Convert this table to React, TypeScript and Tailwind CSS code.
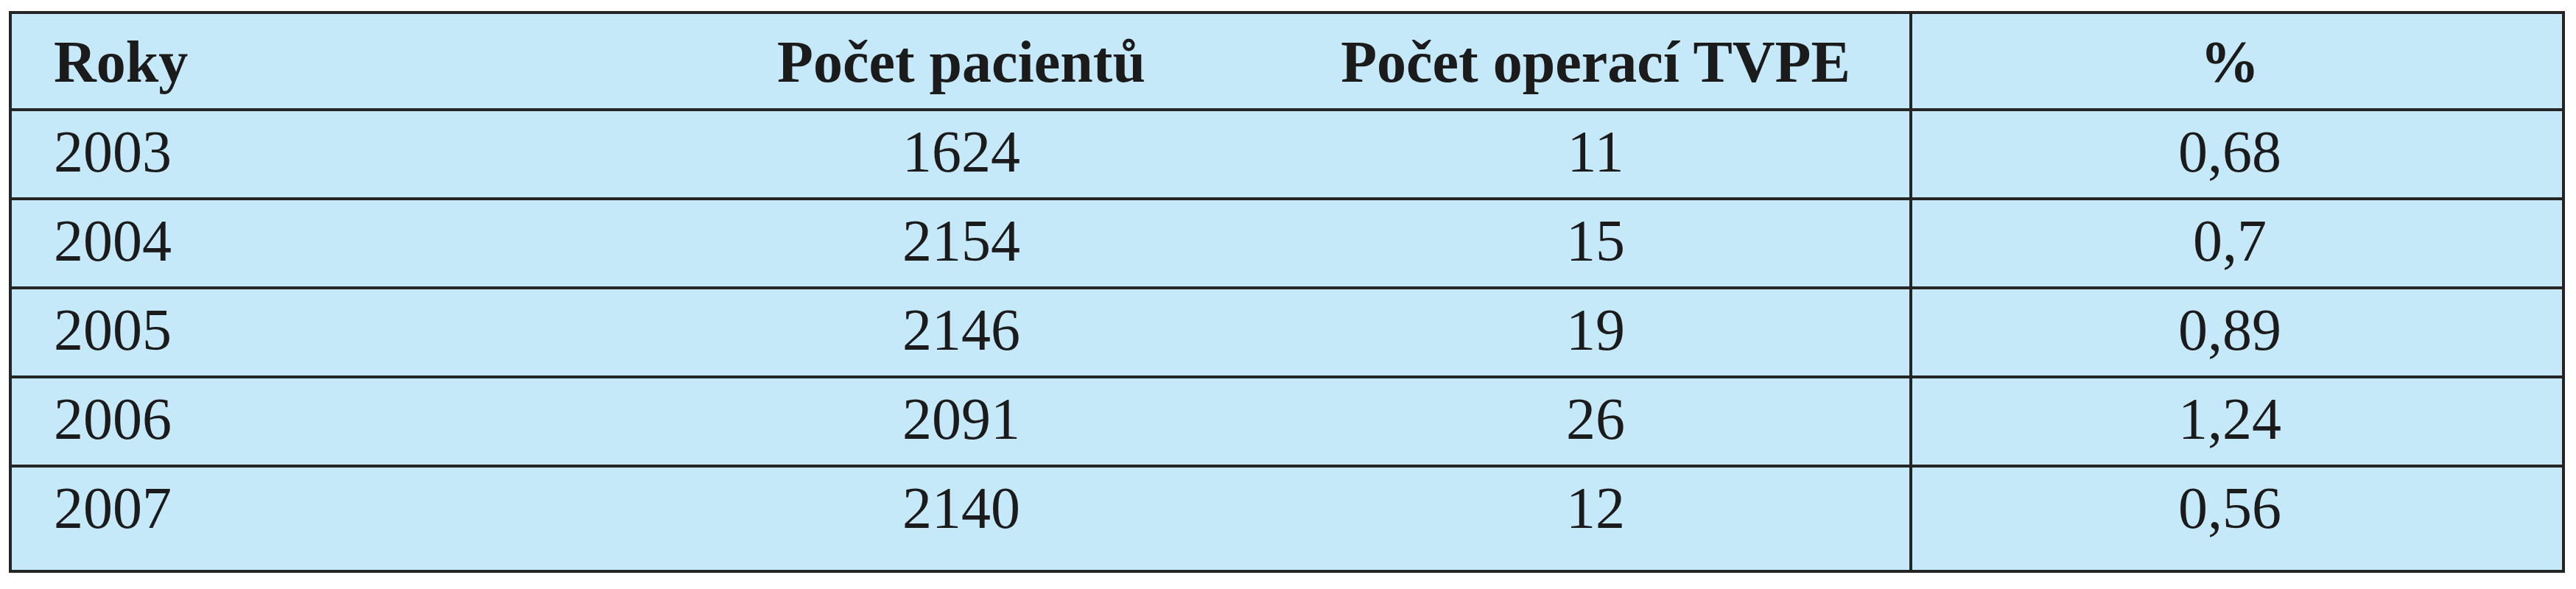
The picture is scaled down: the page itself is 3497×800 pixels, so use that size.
import React from "react";

const rows = [
  ["2003", "1624", "11", "0,68"],
  ["2004", "2154", "15", "0,7"],
  ["2005", "2146", "19", "0,89"],
  ["2006", "2091", "26", "1,24"],
  ["2007", "2140", "12", "0,56"],
];

const cols = "grid grid-cols-[854px_870px_856px_1fr]";

function Row({ cells, pad, className }: { cells: string[]; pad: string; className: string }) {
  return (
    <div className={`${cols} ${className}`}>
      <div className={`${pad} pl-[57px]`}>{cells[0]}</div>
      <div className={`${pad} text-center`}>{cells[1]}</div>
      <div className={`${pad} text-center border-r-4 border-[#252525]`}>{cells[2]}</div>
      <div className={`${pad} pr-[20px] text-center`}>{cells[3]}</div>
    </div>
  );
}

export default function App() {
  return (
    <div className="min-h-[800px] w-[3497px] bg-white pt-[15px] pl-[12px] font-['Liberation_Serif','Times_New_Roman',serif] text-[80px] leading-none text-[#1b1b1b]">
      <div className="w-[3470px] border-4 border-[#252525] bg-[#c6e9fa]">
        <Row
          cells={["Roky", "Počet pacientů", "Počet operací TVPE", "%"]}
          pad="pt-[25px]"
          className="h-[132px] border-b-4 border-[#252525] font-bold"
        />
        {rows.map((r, i) => (
          <Row
            key={r[0]}
            cells={r}
            pad="pt-[15px]"
            className={i === rows.length - 1 ? "h-[139px]" : "h-[121px] border-b-4 border-[#252525]"}
          />
        ))}
      </div>
    </div>
  );
}
